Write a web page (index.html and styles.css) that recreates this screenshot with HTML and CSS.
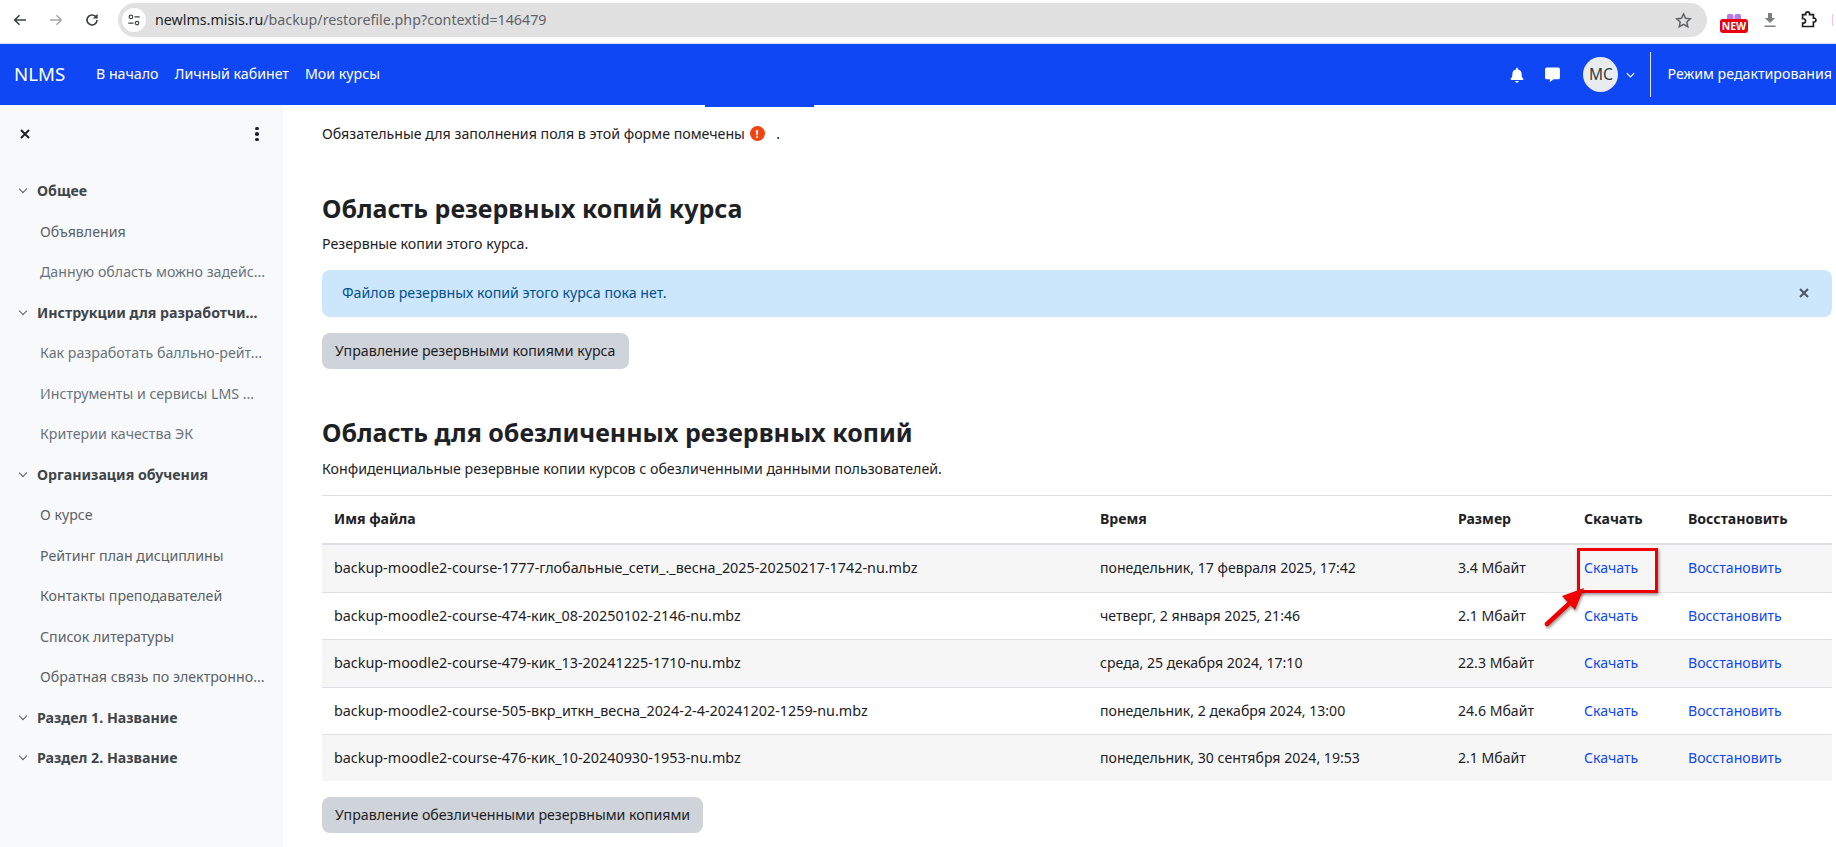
FILE: index.html
```html
<!DOCTYPE html>
<html lang="ru">

<head>
  <meta charset="UTF-8">
  <title>Восстановление курса</title>
  <link rel="stylesheet" href="styles.css">
</head>

<body>
  <!-- Browser toolbar -->
  <div class="browser-bar">
    <div class="browser-nav">
      <svg class="tool-icon" viewBox="0 0 16 16"><path d="M14 8H3M7.500 3.200 2.700 8l4.800 4.800" fill="none" stroke="#3c4043" stroke-width="1.600"/></svg>
      <svg class="tool-icon" viewBox="0 0 16 16"><path d="M2 8h11M8.500 3.200 13.300 8l-4.800 4.800" fill="none" stroke="#a6a8ab" stroke-width="1.600"/></svg>
      <svg class="tool-icon" viewBox="0 0 16 16"><path d="M13 8a5 5 0 1 1-1.500-3.600L13 6" fill="none" stroke="#3c4043" stroke-width="1.600"/><path d="M13.600 1.800v4.800H8.800z" fill="#3c4043"/></svg>
    </div>
    <div class="omnibox">
      <span class="site-chip">
        <svg viewBox="0 0 16 16" width="16" height="16"><circle cx="4.500" cy="4.500" r="2" fill="none" stroke="#3c4043" stroke-width="1.300"/><path d="M8.500 4.500h6M1.500 11.500h6" stroke="#3c4043" stroke-width="1.300"/><circle cx="11.500" cy="11.500" r="2" fill="none" stroke="#3c4043" stroke-width="1.300"/></svg>
      </span>
      <span class="url"><b>newlms.misis.ru</b>/backup/restorefile.php?contextid=146479</span>
      <svg class="star" viewBox="0 0 16 16"><path d="m8 1.800 1.900 4.100 4.500.5-3.300 3 .9 4.500L8 11.600l-4 2.300.9-4.500-3.300-3 4.500-.5z" fill="none" stroke="#5f6368" stroke-width="1.400"/></svg>
    </div>
    <div class="browser-ext">
      <span class="ext-new">
        <svg viewBox="0 0 16 6" width="16" height="6"><path d="M1 6V3c0-3 6-3 7 0 1-3 7-3 7 0v3z" fill="#b57be8"/><path d="M8 0v6" stroke="#fff"/></svg>
        <span class="new-label">NEW</span>
      </span>
      <svg class="tool-icon dl" viewBox="0 0 16 16"><path d="M6 1h4v5h3.200L8 11 2.800 6H6zM2.500 13.500h11V15h-11z" fill="#7b7e82"/></svg>
      <svg class="tool-icon" viewBox="0 0 16 16"><path d="M6 2.500a1.700 1.700 0 0 1 3.400 0v.7h3.400v3.200h.6a1.700 1.700 0 0 1 0 3.400h-.6v4H3.200v-3.100h.7a1.900 1.900 0 0 0 0-3.800h-.7V3.200H6z" fill="none" stroke="#1f1f1f" stroke-width="1.500"/></svg>
      <span class="ext-sep"></span>
    </div>
  </div>

  <!-- Site navbar -->
  <nav class="navbar">
    <span class="brand">NLMS</span>
    <a class="nav-link">В начало</a>
    <a class="nav-link">Личный кабинет</a>
    <a class="nav-link">Мои курсы</a>
    <div class="nav-right">
      <svg class="nav-icon" viewBox="0 0 16 16"><path d="M8 0.800c.6 0 1 .4 1 1v.6a4.600 4.600 0 0 1 3.600 4.500c0 3 1 4 1.800 4.900.2.6-.1 1.200-.8 1.200H2.400c-.7 0-1-.6-.8-1.200.8-.9 1.800-1.900 1.800-4.900A4.600 4.600 0 0 1 7 2.400v-.6c0-.6.4-1 1-1zM6.200 14h3.600a1.800 1.800 0 0 1-3.600 0z" fill="#fff"/></svg>
      <svg class="nav-icon chat" viewBox="0 0 16 16"><path d="M2.500 1.500h11A1.500 1.500 0 0 1 15 3v8a1.500 1.500 0 0 1-1.500 1.500H9L5.500 15v-2.500h-3A1.500 1.500 0 0 1 1 11V3a1.500 1.500 0 0 1 1.500-1.500z" fill="#fff"/></svg>
      <span class="avatar">МС</span>
      <svg class="nav-caret" viewBox="0 0 10 6"><path d="M1 1l4 4 4-4" fill="none" stroke="#fff" stroke-width="1.300"/></svg>
      <span class="nav-divider"></span>
      <span class="edit-mode">Режим редактирования</span>
    </div>
  </nav>

  <div class="page">
    <aside class="sidebar">
      <div class="sidebar-head">
        <svg class="close-x" viewBox="0 0 12 12"><path d="M2 2l8 8M10 2l-8 8" stroke="#1d2125" stroke-width="2"/></svg>
        <span class="kebab"><i></i><i></i><i></i></span>
      </div>
      <ul class="course-index">
        <li class="section">Общее</li>
        <li class="item dark">Объявления</li>
        <li class="item">Данную область можно задейс...</li>
        <li class="section">Инструкции для разработчи...</li>
        <li class="item">Как разработать балльно-рейт...</li>
        <li class="item">Инструменты и сервисы LMS ...</li>
        <li class="item">Критерии качества ЭК</li>
        <li class="section">Организация обучения</li>
        <li class="item dark">О курсе</li>
        <li class="item dark">Рейтинг план дисциплины</li>
        <li class="item dark">Контакты преподавателей</li>
        <li class="item dark">Список литературы</li>
        <li class="item dark">Обратная связь по электронно...</li>
        <li class="section">Раздел 1. Название</li>
        <li class="section">Раздел 2. Название</li>
      </ul>
    </aside>

    <main class="content">
      <div class="tab-line"></div>
      <p class="required-note">Обязательные для заполнения поля в этой форме помечены <span class="req-icon">!</span> <span class="req-dot">.</span></p>

      <h2 class="area-title first">Область резервных копий курса</h2>
      <p class="area-desc">Резервные копии этого курса.</p>
      <div class="alert">
        <span>Файлов резервных копий этого курса пока нет.</span>
        <svg class="alert-close" viewBox="0 0 12 12"><path d="M2 2l8 8M10 2l-8 8" stroke="#4a5560" stroke-width="2"/></svg>
      </div>
      <button class="btn">Управление резервными копиями курса</button>

      <h2 class="area-title second">Область для обезличенных резервных копий</h2>
      <p class="area-desc">Конфиденциальные резервные копии курсов с обезличенными данными пользователей.</p>
      <table class="files">
        <colgroup>
          <col class="col-name"><col class="col-time"><col class="col-size"><col class="col-dl"><col class="col-restore">
        </colgroup>
        <thead>
          <tr><th>Имя файла</th><th>Время</th><th>Размер</th><th>Скачать</th><th>Восстановить</th></tr>
        </thead>
        <tbody>
          <tr>
            <td class="file">backup-moodle2-course-1777-глобальные_сети_._весна_2025-20250217-1742-nu.mbz</td>
            <td>понедельник, 17 февраля 2025, 17:42</td><td>3.4 Мбайт</td>
            <td><a>Скачать</a></td><td><a>Восстановить</a></td>
          </tr>
          <tr>
            <td class="file">backup-moodle2-course-474-кик_08-20250102-2146-nu.mbz</td>
            <td>четверг, 2 января 2025, 21:46</td><td>2.1 Мбайт</td>
            <td><a>Скачать</a></td><td><a>Восстановить</a></td>
          </tr>
          <tr>
            <td class="file">backup-moodle2-course-479-кик_13-20241225-1710-nu.mbz</td>
            <td>среда, 25 декабря 2024, 17:10</td><td>22.3 Мбайт</td>
            <td><a>Скачать</a></td><td><a>Восстановить</a></td>
          </tr>
          <tr>
            <td class="file">backup-moodle2-course-505-вкр_иткн_весна_2024-2-4-20241202-1259-nu.mbz</td>
            <td>понедельник, 2 декабря 2024, 13:00</td><td>24.6 Мбайт</td>
            <td><a>Скачать</a></td><td><a>Восстановить</a></td>
          </tr>
          <tr>
            <td class="file">backup-moodle2-course-476-кик_10-20240930-1953-nu.mbz</td>
            <td>понедельник, 30 сентября 2024, 19:53</td><td>2.1 Мбайт</td>
            <td><a>Скачать</a></td><td><a>Восстановить</a></td>
          </tr>
        </tbody>
      </table>
      <button class="btn btn-second">Управление обезличенными резервными копиями</button>
    </main>
  </div>

  <!-- Red annotation drawn on top of the screenshot -->
  <div class="mark-box"></div>
  <svg class="mark-arrow" viewBox="0 0 60 50"><path d="M6 44 31 21" stroke="#f00000" stroke-width="4.500" stroke-linecap="round"/><path d="M43 8 21 16 34 30z" fill="#f00000"/></svg>
</body>

</html>
```

FILE: styles.css
```css
/* Global Styles */
html,
body {
  margin: 0;
  padding: 0;
  height: 847px;
  overflow: hidden;
}

body {
  font-family: "Noto Sans", sans-serif;
  font-size: 14.2px;
  line-height: 22.5px;
  color: #1d2125;
  background: #fff;
}

/* Browser toolbar */
.browser-bar {
  display: flex;
  align-items: center;
  height: 43px;
  border-bottom: 1px solid #d3e3fd;
  background: #fff;
}

.browser-nav {
  display: flex;
  gap: 20px;
  width: 118px;
  margin-top: -3px;
  padding-left: 12px;
  box-sizing: border-box;
}

.tool-icon {
  width: 16px;
  height: 16px;
}

.omnibox {
  display: flex;
  align-items: center;
  width: 1589px;
  height: 34px;
  margin-top: -3px;
  border-radius: 17px;
  background: #e1e1e1;
}

.site-chip {
  display: flex;
  align-items: center;
  justify-content: center;
  width: 24px;
  height: 24px;
  margin-left: 4px;
  border-radius: 50%;
  background: #fff;
}

.site-chip svg {
  width: 14px;
  height: 14px;
}

.url {
  margin-left: 9px;
  font-size: 14.25px;
  color: #5f6368;
}

.url b {
  font-weight: 400;
  color: #1f1f1f;
}

.star {
  width: 17px;
  height: 17px;
  margin-left: auto;
  margin-right: 15px;
}

.browser-ext {
  display: flex;
  align-items: center;
  flex: 1;
  margin-top: -3px;
  padding-left: 13px;
}

.ext-new {
  display: flex;
  flex-direction: column;
  align-items: center;
  width: 28px;
  margin-top: 6px;
}

.new-label {
  width: 28px;
  height: 14px;
  border-radius: 3px;
  background: #e8000b;
  color: #fff;
  font-size: 10.5px;
  font-weight: 700;
  line-height: 14px;
  text-align: center;
}

.dl {
  margin-left: 14px;
}

.browser-ext .tool-icon + .tool-icon {
  margin-left: 21px;
  width: 18px;
  height: 18px;
}

.ext-sep {
  width: 1px;
  height: 12px;
  margin-left: 15px;
  background: #f5c6d6;
}

/* Navbar */
.navbar {
  display: flex;
  align-items: center;
  height: 61px;
  padding-left: 14px;
  background: #0f47f5;
  color: #fff;
}

.brand {
  width: 82px;
  font-size: 18.7px;
}

.nav-link {
  margin-right: 16px;
}

.nav-right {
  display: flex;
  align-items: center;
  margin-left: auto;
}

.nav-icon {
  width: 16px;
  height: 16px;
}

.chat {
  margin-left: 19px;
  width: 17px;
  height: 17px;
}

.avatar {
  display: flex;
  align-items: center;
  justify-content: center;
  width: 35px;
  height: 35px;
  margin-left: 22px;
  border-radius: 50%;
  background: #e9ecef;
  color: #343a40;
  font-size: 15.5px;
}

.nav-caret {
  width: 9px;
  height: 6px;
  margin-left: 8px;
}

.nav-divider {
  width: 1px;
  height: 45px;
  margin-left: 15px;
  background: #dfe6fb;
}

.edit-mode {
  margin-left: 16px;
  margin-right: 4px;
}

/* Layout */
.page {
  display: flex;
  height: 742px;
}

/* Sidebar */
.sidebar {
  flex: none;
  width: 283px;
  background: #f8f9fa;
  overflow: hidden;
}

.sidebar-head {
  display: flex;
  align-items: center;
  justify-content: space-between;
  height: 18px;
  padding: 20px 24px 0 19px;
}

.close-x {
  width: 12px;
  height: 12px;
}

.kebab {
  display: flex;
  flex-direction: column;
  gap: 2px;
  width: 4px;
}

.kebab i {
  width: 3.5px;
  height: 3.5px;
  border-radius: 50%;
  background: #1d2125;
}

.course-index {
  margin: 28px 0 0;
  padding: 0;
  list-style: none;
}

.course-index li {
  box-sizing: border-box;
  height: 40.5px;
  line-height: 40.5px;
  white-space: nowrap;
}

.section {
  position: relative;
  padding-left: 37px;
  font-weight: 700;
  color: #3f454b;
}

/* chevron in front of a section title */
.section::before {
  content: "";
  position: absolute;
  left: 20px;
  top: 15px;
  width: 5px;
  height: 5px;
  border-right: 1.2px solid #5b6269;
  border-bottom: 1.2px solid #5b6269;
  transform: rotate(45deg);
}

.item {
  padding-left: 40px;
  color: #6a737b;
}

.item.dark {
  color: #5b6269;
}

/* Main content */
.content {
  flex: 1;
  min-width: 0;
  padding: 0 4px 0 39px;
}

.tab-line {
  width: 109px;
  height: 2px;
  margin-left: 383px;
  background: #0f47f5;
}

.required-note {
  margin: 16px 0 0;
}

.req-icon {
  display: inline-block;
  width: 15px;
  height: 15px;
  margin: 0 4px 0 1px;
  border-radius: 50%;
  background: #f0440e;
  color: #fff;
  font-size: 11px;
  font-weight: 700;
  line-height: 15px;
  text-align: center;
  vertical-align: 1px;
}

.req-dot {
  margin-left: 4px;
}

.area-title {
  margin: 48px 0 8px;
  font-size: 25px;
  font-weight: 700;
  line-height: 31.5px;
}

.area-title.first {
  margin-top: 47.5px;
}

.area-title.second {
  margin-bottom: 9px;
}

.area-desc {
  margin: 0 0 14.5px;
}

.alert {
  display: flex;
  align-items: center;
  justify-content: space-between;
  height: 47px;
  margin-bottom: 16px;
  padding: 0 22px 0 20px;
  box-sizing: border-box;
  border-radius: 8px;
  background: #cce6fc;
  color: #00508f;
}

.alert-close {
  width: 12px;
  height: 12px;
}

.btn {
  display: block;
  height: 36.5px;
  padding: 0 13px;
  border: none;
  border-radius: 8px;
  background: #ced4da;
  color: #1d2125;
  font-family: inherit;
  font-size: 14.2px;
}

/* Table */
.files {
  width: 1510px;
  border-collapse: collapse;
  table-layout: fixed;
}

.col-name { width: 766px; }
.col-time { width: 358px; }
.col-size { width: 126px; }
.col-dl { width: 104px; }
.col-restore { width: 156px; }

.files th,
.files td {
  padding: 12px;
  text-align: left;
  white-space: nowrap;
  border-top: 1px solid #dee2e6;
  font-size: 14.1px;
}

.files th {
  padding-bottom: 13px;
  font-weight: 700;
  border-bottom: 2px solid #dee2e6;
}

.files td.file {
  font-size: 14.35px;
}

.files tbody tr:nth-child(odd) {
  background: #f6f6f7;
}

.files tbody tr:last-child td {
  padding-bottom: 11px;
}

.files a {
  color: #0f47f5;
}

.btn-second {
  margin-top: 16px;
}

/* Annotation */
.mark-box {
  position: absolute;
  left: 1577px;
  top: 548px;
  width: 75px;
  height: 39px;
  border: 3px solid #f00000;
  box-shadow: 1px 2px 3px rgba(0, 0, 0, 0.4);
}

.mark-arrow {
  position: absolute;
  left: 1541px;
  top: 580px;
  width: 60px;
  height: 50px;
  filter: drop-shadow(1px 2px 1.5px rgba(0, 0, 0, 0.4));
}
```
